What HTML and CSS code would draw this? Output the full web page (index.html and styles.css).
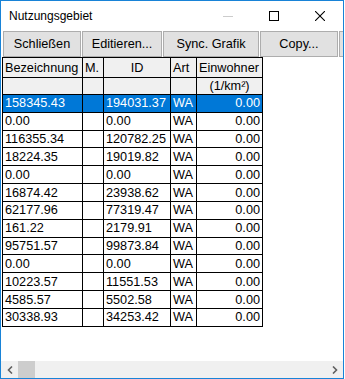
FILE: index.html
```html
<!DOCTYPE html>
<html>
<head>
<meta charset="utf-8">
<link rel="stylesheet" href="styles.css">
</head>
<body>
<div class="window">
  <div class="titlebar">
    <span class="title">Nutzungsgebiet</span>
    <div class="controls">
      <span class="ctl"><svg width="10" height="10" viewBox="0 0 10 10"><path d="M0 5.5H10" stroke="#cccccc" stroke-width="1"/></svg></span>
      <span class="ctl"><svg width="10" height="10" viewBox="0 0 10 10"><rect x="0.5" y="0.5" width="9" height="9" fill="none" stroke="#000" stroke-width="1"/></svg></span>
      <span class="ctl"><svg width="10" height="10" viewBox="0 0 10 10"><path d="M0 0L10 10M10 0L0 10" stroke="#000" stroke-width="1.1"/></svg></span>
    </div>
  </div>
  <div class="toolbar">
    <button class="btn b1">Schließen</button>
    <button class="btn b2">Editieren...</button>
    <button class="btn b3">Sync. Grafik</button>
    <button class="btn b4">Copy...</button>
    <button class="btn b5"></button>
  </div>
  <div class="content">
    <table class="grid">
      <colgroup>
        <col class="c1"><col class="c2"><col class="c3"><col class="c4"><col class="c5">
      </colgroup>
      <thead>
        <tr class="h1"><th>Bezeichnung</th><th>M.</th><th class="center">ID</th><th>Art</th><th>Einwohner</th></tr>
        <tr class="h2"><th></th><th></th><th></th><th></th><th class="center">(1/km²)</th></tr>
      </thead>
      <tbody>
        <tr class="sel"><td>158345.43</td><td></td><td>194031.37</td><td>WA</td><td class="r">0.00</td></tr>
        <tr><td>0.00</td><td></td><td>0.00</td><td>WA</td><td class="r">0.00</td></tr>
        <tr><td>116355.34</td><td></td><td>120782.25</td><td>WA</td><td class="r">0.00</td></tr>
        <tr><td>18224.35</td><td></td><td>19019.82</td><td>WA</td><td class="r">0.00</td></tr>
        <tr><td>0.00</td><td></td><td>0.00</td><td>WA</td><td class="r">0.00</td></tr>
        <tr><td>16874.42</td><td></td><td>23938.62</td><td>WA</td><td class="r">0.00</td></tr>
        <tr><td>62177.96</td><td></td><td>77319.47</td><td>WA</td><td class="r">0.00</td></tr>
        <tr><td>161.22</td><td></td><td>2179.91</td><td>WA</td><td class="r">0.00</td></tr>
        <tr><td>95751.57</td><td></td><td>99873.84</td><td>WA</td><td class="r">0.00</td></tr>
        <tr><td>0.00</td><td></td><td>0.00</td><td>WA</td><td class="r">0.00</td></tr>
        <tr><td>10223.57</td><td></td><td>11551.53</td><td>WA</td><td class="r">0.00</td></tr>
        <tr><td>4585.57</td><td></td><td>5502.58</td><td>WA</td><td class="r">0.00</td></tr>
        <tr><td>30338.93</td><td></td><td>34253.42</td><td>WA</td><td class="r">0.00</td></tr>
      </tbody>
    </table>
  </div>
  <div class="hscroll">
    <span class="arrow"><svg width="8" height="8" viewBox="0 0 8 8"><path d="M6 0.5L2.5 4L6 7.5" fill="none" stroke="#606060" stroke-width="1.6"/></svg></span>
    <div class="track"><div class="thumb"></div></div>
    <span class="arrow"><svg width="8" height="8" viewBox="0 0 8 8"><path d="M2 0.5L5.5 4L2 7.5" fill="none" stroke="#606060" stroke-width="1.6"/></svg></span>
  </div>
</div>
</body>
</html>
```
FILE: styles.css
```css
html, body {
  margin: 0;
  padding: 0;
  background: #ffffff;
}
body {
  font-family: "Liberation Sans", Arial, sans-serif;
  color: #000;
}
.window {
  box-sizing: border-box;
  width: 344px;
  height: 379px;
  border: 1px solid #1883d7;
  background: #ffffff;
  display: flex;
  flex-direction: column;
  overflow: hidden;
}
.titlebar {
  height: 30px;
  flex: none;
  display: flex;
  align-items: center;
  justify-content: space-between;
}
.title {
  font-size: 12px;
  padding-left: 8px;
}
.controls {
  display: flex;
  height: 100%;
}
.ctl {
  width: 46px;
  height: 100%;
  display: flex;
  align-items: center;
  justify-content: center;
}
.toolbar {
  flex: none;
  height: 26px;
  display: flex;
  gap: 1px;
  padding-left: 2px;
  white-space: nowrap;
}
.btn {
  flex: none;
  box-sizing: border-box;
  height: 26px;
  margin: 0;
  padding: 0;
  background: #e1e1e1;
  border: 1px solid #adadad;
  font-family: "Liberation Sans", Arial, sans-serif;
  font-size: 12.7px;
  color: #000;
  text-align: center;
}
.b1 { width: 78px; }
.b2 { width: 80px; }
.b3 { width: 96px; }
.b4 { width: 78px; }
.b5 { width: 20px; }
.content {
  flex: 1;
  padding-left: 1px;
}
.grid {
  border-collapse: collapse;
  table-layout: fixed;
  width: 260px;
  font-size: 12.7px;
}
.c1 { width: 80px; }
.c2 { width: 21px; }
.c3 { width: 67px; }
.c4 { width: 26px; }
.c5 { width: 66px; }
.grid th, .grid td {
  border: 1px solid #000;
  padding: 0 0 0 2px;
  white-space: nowrap;
  overflow: hidden;
  text-align: left;
  font-weight: normal;
}
.grid th {
  background: #f0f0f0;
}
.grid th.center { text-align: center; padding: 0; }
.grid td.r { text-align: right; padding: 0 2px 0 0; }
.h1 { height: 20px; }
.h2 { height: 17px; }
.grid tbody tr { height: 17.83px; }
.sel td {
  background: #0078d7;
  color: #ffffff;
}
.hscroll {
  flex: none;
  height: 17px;
  background: #f0f0f0;
  display: flex;
  align-items: center;
}
.arrow {
  width: 17px;
  height: 17px;
  display: flex;
  align-items: center;
  justify-content: center;
  flex: none;
}
.track {
  flex: 1;
  height: 100%;
}
.thumb {
  width: 17px;
  height: 100%;
  background: #cdcdcd;
}
```
